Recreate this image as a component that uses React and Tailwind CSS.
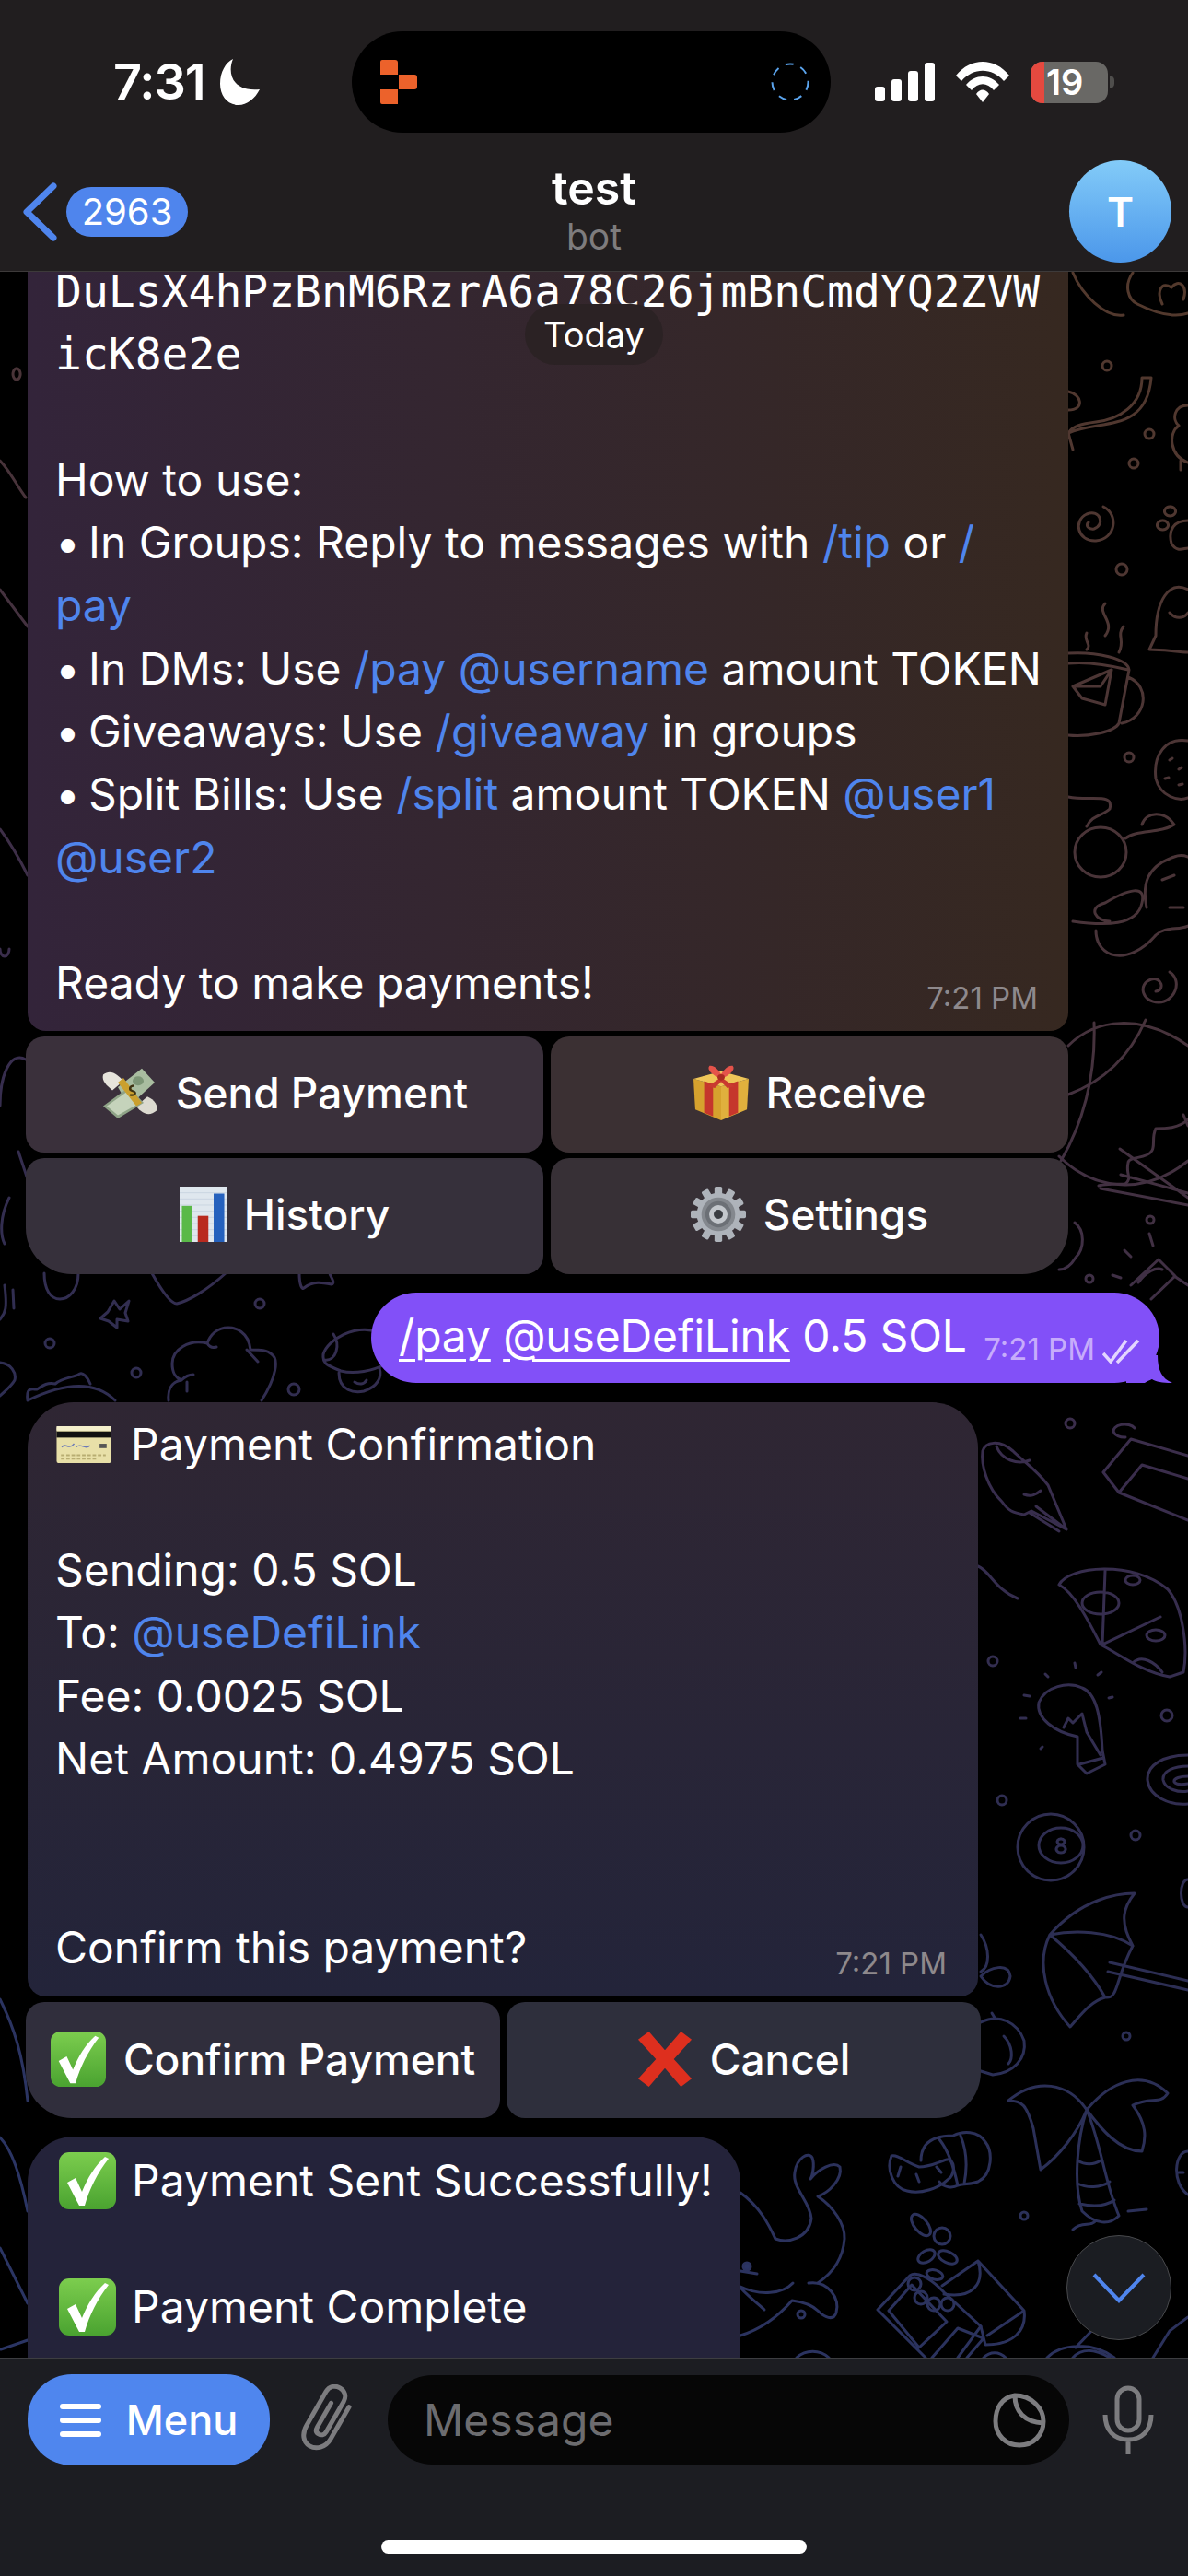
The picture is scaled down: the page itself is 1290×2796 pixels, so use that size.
const Dot = ({ x, y, r = 6 }) => <circle cx={x} cy={y} r={r} />;

// doodle wallpaper, drawn in page coordinates
const Wallpaper = () => (
  <svg className="absolute top-0 left-0" width="1290" height="2796" viewBox="0 0 1290 2796" fill="none" stroke="url(#wp)" strokeWidth="3" strokeLinecap="round" strokeLinejoin="round">
    <defs>
      <linearGradient id="wp" gradientUnits="userSpaceOnUse" x1="1290" y1="300" x2="300" y2="2500">
        <stop offset="0" stopColor="#53392c" />
        <stop offset="0.3" stopColor="#48333a" />
        <stop offset="0.5" stopColor="#3a2d4c" />
        <stop offset="0.72" stopColor="#2b2e54" />
        <stop offset="1" stopColor="#2b3564" />
      </linearGradient>
    </defs>
    {/* top right */}
    <path d="M1165 296C1175 320 1200 345 1220 342M1230 296C1220 310 1225 325 1235 330C1255 340 1275 345 1290 340M1262 330C1255 315 1262 305 1272 312C1280 302 1290 310 1285 325" />
    <Dot x={1202} y={397} r={5} />
    <path d="M1160 470C1195 455 1245 470 1250 410L1240 410C1240 440 1215 455 1190 458C1175 460 1165 462 1160 470L1165 488M1160 425C1175 428 1178 445 1160 445" />
    <Dot x={1248} y={471} r={5} />
    <Dot x={1231} y={503} r={5} />
    <path d="M1290 440C1275 440 1272 455 1280 462C1268 470 1270 495 1290 502M1282 500L1282 510" />
    <path d="M1198 550C1215 558 1212 585 1190 587C1170 588 1165 565 1180 558C1195 552 1200 570 1188 574C1182 575 1178 570 1182 567" />
    <path d="M1290 565C1275 565 1268 575 1272 590C1278 600 1285 595 1290 595M1262 565a6 5 0 1 0 1 0M1270 550a6 5 0 1 0 1 0" />
    <Dot x={1218} y={618} r={6} />
    <path d="M1290 640C1270 630 1255 650 1255 690L1248 705C1265 705 1280 708 1290 708M1270 665C1276 672 1285 672 1290 665" />
    <path d="M1160 709C1190 707 1225 715 1226 727L1215 785C1210 795 1180 800 1160 798M1160 720C1180 718 1205 722 1225 727M1225 735C1250 745 1245 780 1218 785M1165 745L1207 727L1200 765L1175 758ZM1165 745L1195 745L1207 727" />
    <path d="M1200 655C1190 665 1212 675 1200 690M1180 687C1176 695 1186 700 1180 705M1220 680C1212 690 1222 695 1215 708" />
    <Dot x={1226} y={822} r={5} />
    <path d="M1290 804C1265 800 1252 820 1255 845C1260 865 1280 870 1290 866M1270 825l3 -2M1280 835l3 -2M1265 845l4 -1M1280 852l4 -1" />
    <ellipse cx="1195" cy="925" rx="28" ry="27" />
    <path d="M1160 865C1185 870 1210 860 1205 878C1198 885 1185 885 1180 897M1222 910C1235 900 1260 905 1275 895C1265 880 1245 880 1240 895M1165 1000C1200 1005 1235 1005 1240 980C1245 960 1225 965 1200 980C1180 985 1190 1000 1205 1000M1190 1010C1190 1040 1225 1050 1255 1015C1265 1005 1280 1010 1290 1005M1245 985C1240 960 1245 940 1275 930C1280 928 1285 928 1290 930M1262 955L1275 950M1270 985L1285 985" />
    <path d="M1270 1055C1285 1065 1275 1088 1258 1088C1240 1088 1235 1068 1250 1063C1262 1060 1265 1075 1255 1076" />
    {/* globe beside the keyboard rows */}
    <path d="M1160 1135C1190 1105 1240 1100 1290 1135M1188 1110C1190 1170 1175 1220 1152 1260M1244 1107C1225 1150 1195 1175 1160 1188M1150 1255C1185 1290 1240 1300 1290 1260" />
    <path d="M1290 1215C1280 1225 1265 1225 1255 1225C1250 1235 1255 1245 1250 1250C1245 1258 1225 1255 1225 1262C1222 1275 1230 1278 1222 1285C1210 1285 1200 1285 1193 1287M1216 1247L1290 1300M1217 1275L1290 1295M1195 1290L1290 1308M1285 1210L1290 1222" />
    <Dot x={1249} y={1324} r={4} />
    <Dot x={1183} y={1388} r={4} />
    <path d="M1248 1339L1252 1352M1221 1357L1228 1364M1208 1384L1217 1387M1167 1327C1178 1335 1178 1355 1168 1365C1162 1375 1155 1378 1150 1378" />
    <path d="M1228 1395L1258 1367L1276 1385L1250 1410M1236 1392C1245 1380 1255 1375 1262 1378M1275 1385L1290 1395" />
    <path d="M48 1382C48 1400 55 1410 65 1410C75 1410 85 1400 85 1382M5 1395C8 1420 6 1425 0 1432M14 1400L15 1420" />
    <path d="M165 1382C175 1400 185 1415 192 1415C205 1412 225 1400 245 1382" />
    <path d="M325 1382C325 1395 328 1400 330 1398C340 1390 350 1392 360 1394C365 1392 358 1385 358 1382" />
    <path d="M124 1412L130 1421L140 1412L136 1425L139 1434L127 1432L127 1441L118 1434L109 1431L117 1424Z" />
    <Dot x={54} y={1458} r={5} />
    <Dot x={282} y={1415} r={5} />
    <Dot x={148} y={1490} r={5} />
    <Dot x={319} y={1508} r={6} />
    <path d="M0 1479C12 1480 18 1490 16 1498C12 1505 5 1510 0 1515" />
    <path d="M125 1520C105 1500 75 1498 30 1520M30 1520C28 1505 35 1508 40 1508C45 1505 50 1500 60 1502C68 1495 80 1495 85 1492C90 1488 95 1495 98 1502" />
    <path d="M284 1520C300 1495 303 1475 295 1470C290 1465 283 1465 272 1465C270 1445 255 1441 248 1441C235 1441 228 1450 225 1458C205 1453 187 1465 187 1480C187 1490 190 1495 197 1498C185 1500 182 1510 183 1520M225 1458C228 1463 232 1463 235 1462M268 1465L280 1478M197 1498C200 1495 205 1492 210 1492M203 1500L203 1510" />
    <path d="M415 1447C385 1435 355 1455 351 1470C350 1480 355 1482 370 1488C385 1492 405 1488 420 1480M368 1490C368 1510 385 1512 395 1510C410 1505 415 1495 412 1485M362 1448C370 1460 365 1478 352 1476M385 1500C390 1503 395 1503 398 1498" />
    {/* right column */}
    <path d="M1067 1575C1070 1565 1085 1562 1100 1575C1110 1585 1125 1595 1138 1612L1158 1660L1120 1640L1112 1644C1100 1642 1095 1640 1088 1630C1072 1615 1065 1590 1067 1575ZM1082 1570C1088 1585 1105 1590 1118 1585M1158 1660L1125 1635M1150 1662L1118 1642M1112 1622C1120 1625 1125 1622 1130 1618" />
    <Dot x={1162} y={1545} r={5} />
    <path d="M1198 1598L1228 1562L1290 1580M1198 1598L1215 1620L1290 1650M1215 1620L1240 1590L1290 1605M1222 1560a12 7 0 1 1 10 -10" />
    <path d="M1062 1700C1075 1705 1080 1725 1105 1735" />
    <path d="M1150 1720C1160 1700 1230 1693 1268 1725C1285 1745 1290 1790 1285 1815L1270 1820C1240 1815 1215 1795 1195 1785C1180 1755 1165 1728 1150 1720ZM1200 1705L1197 1785M1197 1785L1260 1755M1175 1740a20 12 0 1 0 40 0a20 12 0 1 0 -40 0M1222 1715a8 5 0 1 0 16 0a8 5 0 1 0 -16 0M1245 1775a10 6 0 1 0 20 0a10 6 0 1 0 -20 0M1230 1805C1240 1795 1255 1805 1262 1815" />
    <path d="M1170 1885C1145 1880 1125 1865 1128 1848C1135 1830 1160 1825 1175 1832C1190 1838 1195 1860 1197 1900L1200 1915L1180 1925L1170 1915ZM1155 1875L1160 1865L1165 1870L1175 1860L1180 1880L1195 1905M1172 1915L1198 1908" />
    <path d="M1112 1840L1118 1841M1108 1865L1114 1865M1135 1817L1138 1820M1167 1805L1168 1810M1192 1818L1196 1815M1204 1843L1208 1842M1130 1898L1132 1896" />
    <Dot x={1078} y={1803} r={5} />
    <Dot x={1267} y={1862} r={6} />
    <Dot x={1088} y={1954} r={5} />
    <Dot x={1233} y={1992} r={5} />
    <path d="M1290 1905C1265 1905 1245 1915 1246 1932C1248 1950 1270 1960 1290 1958M1290 1917C1275 1917 1262 1922 1263 1932C1265 1942 1280 1946 1290 1944M1290 1928C1282 1928 1274 1930 1275 1934C1278 1938 1285 1937 1290 1936" />
    <circle cx="1141" cy="2005" r="36" />
    <ellipse cx="1152" cy="2003" rx="24" ry="19" />
    <path d="M1152 1996a4 3 0 1 0 .1 0M1152 2003a5 4 0 1 0 .1 0" />
    <path d="M1290 2040C1280 2040 1280 2070 1290 2070" />
    <path d="M1140 2100C1175 2060 1215 2055 1232 2055C1220 2070 1215 2085 1230 2112M1140 2100C1165 2095 1205 2095 1230 2112M1140 2100C1125 2130 1135 2170 1162 2200C1175 2185 1185 2172 1200 2168C1215 2170 1210 2150 1230 2112M1140 2100C1170 2125 1190 2150 1200 2168M1205 2130L1290 2150M1203 2140L1290 2160" />
    <path d="M1065 2100C1075 2115 1075 2135 1065 2140M1065 2145C1075 2160 1095 2160 1097 2145C1095 2130 1075 2135 1065 2145" />
    <Dot x={1223} y={2210} r={4} />
    <path d="M1065 2195C1085 2185 1105 2195 1112 2215C1115 2235 1100 2250 1078 2252L1065 2248M1080 2190L1077 2185M1090 2210C1100 2220 1100 2235 1095 2240" />
    <path d="M1180 2290C1160 2260 1125 2255 1095 2280C1110 2280 1115 2285 1122 2310L1130 2355C1150 2340 1170 2315 1180 2290ZM1180 2290C1205 2260 1240 2245 1268 2272C1260 2285 1250 2275 1230 2285C1245 2305 1245 2320 1240 2335C1215 2335 1195 2310 1180 2290ZM1180 2290C1170 2320 1165 2370 1175 2400C1190 2415 1205 2415 1215 2405C1200 2370 1195 2325 1180 2290ZM1170 2345C1178 2350 1188 2350 1195 2345M1170 2370C1180 2375 1195 2375 1205 2368M1172 2392C1185 2395 1200 2395 1210 2388M1165 2420C1175 2410 1185 2418 1190 2410M1225 2400L1245 2398" />
    <Dot x={1112} y={2405} r={4} />
    <path d="M1290 2335C1275 2335 1272 2370 1290 2382M1280 2358L1285 2358" />
    {/* mandarin */}
    <path d="M968 2340C975 2338 985 2348 998 2352C1015 2352 1030 2340 1032 2345C1038 2350 1035 2362 1030 2365C1020 2375 1000 2382 985 2378C970 2375 962 2355 968 2340Z" />
    <path d="M1000 2345C1000 2325 1015 2318 1035 2318C1045 2313 1062 2312 1070 2325C1078 2335 1078 2360 1062 2368C1050 2372 1045 2370 1040 2372C1035 2375 1025 2375 1020 2368M1020 2322C1030 2335 1035 2350 1040 2372M1043 2318C1050 2335 1050 2355 1047 2370M978 2352L975 2362M995 2360L998 2368M1017 2352L1022 2358" />
    {/* coins and box */}
    <ellipse cx="1000" cy="2415" rx="14" ry="7" transform="rotate(50 1000 2415)" />
    <Dot x={1023} y={2427} r={9} />
    <ellipse cx="1006" cy="2449" rx="10" ry="6" transform="rotate(-30 1006 2449)" />
    <ellipse cx="1029" cy="2450" rx="11" ry="6" transform="rotate(25 1029 2450)" />
    <ellipse cx="1015" cy="2469" rx="9" ry="5" transform="rotate(15 1015 2469)" />
    <path d="M953 2507L988 2470C995 2465 1010 2472 1025 2488L1065 2525L1040 2559M1005 2559L953 2507M965 2508L990 2480L1028 2520L998 2548Z" />
    <Dot x={993} y={2479} r={7} />
    <Dot x={1000} y={2494} r={7} />
    <Dot x={1014} y={2501} r={7} />
    <Dot x={1029} y={2501} r={7} />
    <path d="M1023 2481L1062 2454L1112 2508C1115 2530 1100 2545 1070 2545L1065 2525M1062 2454C1070 2480 1055 2495 1025 2490M1112 2508L1072 2535M1012 2559L1040 2527L1068 2538L1050 2559" />
    {/* dolphin */}
    <path d="M804 2380C825 2395 835 2415 842 2430C855 2435 878 2430 881 2408C880 2390 860 2375 863 2358C865 2342 878 2335 882 2342C885 2350 882 2362 880 2365C888 2355 905 2345 912 2352C915 2365 900 2380 888 2384C905 2395 918 2415 917 2430C915 2455 900 2470 888 2478" />
    <path d="M804 2482C825 2492 850 2490 861 2478M878 2478C900 2475 912 2495 908 2510C905 2520 895 2515 888 2508C880 2500 868 2498 860 2497C840 2520 820 2530 804 2535M804 2483C815 2495 825 2502 830 2507M804 2465L822 2468" />
    <Dot x={870} y={2512} r={4} />
    <circle cx="811" cy="2460" r="4" fill="#2b3564" />
    <path d="M865 2559C875 2550 890 2550 900 2559M1068 2559C1075 2552 1085 2552 1092 2559M1137 2559C1150 2545 1185 2540 1210 2559M1165 2559C1175 2548 1190 2550 1205 2559M1190 2525L1168 2548M1252 2559L1270 2530L1290 2515" />
    {/* left strip */}
    <path d="M0 2170C15 2200 25 2230 30 2280M0 2320C10 2330 20 2350 30 2400M0 2440L30 2500M10 1300C0 1320 0 1340 5 1350M28 1150C10 1140 0 1170 0 1200M18 400a4 6 0 1 0 .1 0M0 500C10 510 20 530 28 540M0 640L30 680M0 900C15 920 25 940 30 950M0 1030a5 8 0 1 0 10 0M20 1250L30 1280" />
    <path d="M1 2550L30 2540" />
  </svg>
);

const Check = ({ size = 62 }) => (
  <svg width={size} height={size} viewBox="0 0 62 62" className="shrink-0">
    <defs>
      <linearGradient id="chk" x1="0" y1="0" x2="0" y2="1">
        <stop offset="0" stopColor="#7ccd4e" />
        <stop offset="1" stopColor="#4aa330" />
      </linearGradient>
    </defs>
    <rect x="0" y="0" width="62" height="62" rx="11" fill="url(#chk)" />
    <path d="M9 33L18 28L25 43C31 28 39 15 50 5L54 7C42 22 33 40 28 58L22 58Z" fill="#fff" />
  </svg>
);

const Cross = () => (
  <svg width="60" height="60" viewBox="0 0 62 62" className="shrink-0">
    <path d="M1 9L13 0L31 21L49 0L61 9L41 31L61 53L49 62L31 41L13 62L1 53L21 31Z" fill="#de2f1e" />
  </svg>
);

const Card = () => (
  <svg width="62" height="40" viewBox="0 0 62 42" className="shrink-0">
    <rect width="62" height="42" rx="2" fill="#e8e0a8" />
    <rect y="0" width="62" height="5" fill="#f5f1cc" />
    <rect y="6" width="62" height="7" fill="#111" />
    <path d="M6 24C10 18 14 28 20 20M22 24C28 18 32 28 38 22" stroke="#6b79b8" strokeWidth="1.5" fill="none" />
    <rect x="49" y="20" width="8" height="5" fill="#555" />
    <path d="M5 33H56M5 37H45" stroke="#b8ad72" strokeWidth="2" strokeDasharray="4 2" />
  </svg>
);

const MoneyWings = () => (
  <svg width="62" height="56" viewBox="0 0 62 66" preserveAspectRatio="none" className="shrink-0">
    <path d="M2 10C10 2 18 10 24 18L12 30C6 24 0 18 2 10Z" fill="#e6e4dc" />
    <path d="M60 56C52 64 44 60 38 50L50 38C58 42 62 50 60 56Z" fill="#dcdad0" />
    <path d="M18 26L44 2L58 20L30 50Z" fill="#a9bda0" />
    <path d="M2 50L30 26L46 46L18 66Z" fill="#8fa488" />
    <path d="M6 50L30 30L42 46L18 62Z" fill="#c5d3bb" />
    <circle cx="40" cy="18" r="6" fill="#7d9676" />
    <path d="M24 14L44 46L38 50L18 20Z" fill="#caa02f" />
    <path d="M36 24C30 24 30 30 34 31C38 32 38 37 31 36" stroke="#3d3212" strokeWidth="2.5" fill="none" />
  </svg>
);

const Gift = () => (
  <svg width="60" height="60" viewBox="0 0 62 72" preserveAspectRatio="none" className="shrink-0">
    <path d="M0 18L31 28V72L2 58Z" fill="#d6a22e" />
    <path d="M62 18L31 28V72L60 58Z" fill="#e0b03d" />
    <path d="M0 18L31 8L62 18L31 28Z" fill="#efc658" />
    <path d="M12 21L22 25V67L12 62ZM40 25L50 21V62L40 67Z" fill="#c5362c" />
    <path d="M31 18C22 14 14 6 18 1C24 0 29 8 31 12C33 8 38 0 44 1C48 6 40 14 31 18Z" fill="#e4534a" />
    <path d="M31 16L16 28L24 30L31 22L38 30L46 28Z" fill="#c93a30" />
    <circle cx="31" cy="16" r="4" fill="#a92a22" />
  </svg>
);

const Chart = () => (
  <svg width="51" height="60" viewBox="0 0 62 72" preserveAspectRatio="none" className="shrink-0">
    <rect width="62" height="72" fill="#dfe7ee" />
    <path d="M0 8H62M0 16H62M0 24H62M0 32H62M0 40H62M0 48H62M0 56H62M0 64H62" stroke="#c6d2de" strokeWidth="1" />
    <rect x="3" y="25" width="14" height="47" fill="#5ab948" />
    <rect x="24" y="38" width="14" height="34" fill="#b92a1f" />
    <rect x="45" y="9" width="14" height="63" fill="#2561bd" />
  </svg>
);

const Gear = () => (
  <svg width="60" height="60" viewBox="0 0 72 72" className="shrink-0">
    <g fill="#aeb3ba">
      <circle cx="36" cy="36" r="28" />
      {[0, 30, 60, 90, 120, 150, 180, 210, 240, 270, 300, 330].map((a) => (
        <rect key={a} x="31" y="0" width="10" height="14" rx="2" transform={`rotate(${a} 36 36)`} />
      ))}
    </g>
    <circle cx="36" cy="36" r="22" fill="#84888e" />
    <circle cx="36" cy="36" r="17" fill="#6c7076" />
    <circle cx="36" cy="36" r="12" fill="#c3c7cc" />
    <circle cx="36" cy="36" r="6" fill="#3a3d42" />
  </svg>
);

const Link = ({ children }) => <span className="text-[#4f85ed]">{children}</span>;

const Bullet = () => <span className="inline-block w-[36px]">•</span>;

const Time = ({ className }) => (
  <span className={`absolute text-[33px] leading-none text-[#8e898c] ${className}`}>7:21 PM</span>
);

const KeyButton = ({ className, icon, label }) => (
  <button className={`flex h-[126px] items-center justify-center gap-[19px] pb-[3px] text-[46px] font-medium text-white ${className}`}>
    {icon}
    <span>{label}</span>
  </button>
);

export default function App() {
  return (
    <div className="relative flex h-[2796px] w-[1290px] flex-col overflow-hidden bg-black text-white [font-family:Inter,sans-serif]">
      <Wallpaper />

      <header className="relative z-10 h-[295px] shrink-0 border-b border-[#3d3a3a] bg-[#211e1f]">
        <div className="flex items-center pt-[34px] pl-[123px]">
          <div className="flex w-[259px] items-center gap-[16px]">
            <span className="text-[54px] leading-none font-semibold tracking-[-1px]">7:31</span>
            <svg width="44" height="50" viewBox="0 0 44 50" fill="#fff">
              <path d="M14 0C8 14 12 36 43 33C38 43 29 50 20 50C8 50 0 40 0 27C0 14 6 4 14 0Z" />
            </svg>
          </div>
          <div className="flex h-[110px] w-[520px] items-center justify-between rounded-full bg-black pr-[23px] pl-[31px]">
            <svg width="40" height="48" viewBox="0 0 40 48" fill="#ec622b">
              <path d="M0 2a2 2 0 0 1 2-2H16a3 3 0 0 1 3 3V16H0ZM20 16H37a3 3 0 0 1 3 3V29a3 3 0 0 1-3 3H20ZM0 32H19V48H2a2 2 0 0 1-2-2Z" />
            </svg>
            <svg width="42" height="42" viewBox="0 0 42 42" fill="none" stroke="#5aa3ec" strokeWidth="2">
              <circle cx="21" cy="21" r="19.5" strokeDasharray="9 8.2" />
            </svg>
          </div>
          <div className="ml-[48px] flex items-center">
            <svg width="66" height="42" viewBox="0 0 66 42" fill="#fff">
              <rect x="0" y="26" width="11" height="16" rx="3" />
              <rect x="18" y="18" width="11" height="24" rx="3" />
              <rect x="36" y="9" width="11" height="33" rx="3" />
              <rect x="54" y="0" width="11" height="42" rx="3" />
            </svg>
            <svg className="ml-[22px]" width="58" height="44" viewBox="0 0 58 44" fill="#fff">
              <path d="M0 15C16 -5 42 -5 58 15L52 21C39 6 19 6 6 21Z" />
              <path d="M11 25C21 13 37 13 47 25L41 31C34 22 24 22 17 31Z" />
              <path d="M22 35C26 29 32 29 36 35L29 44Z" />
            </svg>
            <div className="ml-[23px] flex h-[45px] w-[84px] items-center overflow-hidden rounded-[13px] bg-[#696865]">
              <div className="h-full w-[15px] bg-[#e5493f]" />
              <span className="ml-[2px] text-[38px] leading-[40px] font-semibold">19</span>
            </div>
            <div className="ml-[2px] h-[14px] w-[5px] rounded-r-full bg-[#4f4e4c]" />
          </div>
        </div>

        <div className="mt-[30px] flex h-[111px] items-center pr-[18px] pl-[25px]">
          <div className="flex w-[300px] items-center gap-[10px]">
            <svg width="37" height="64" viewBox="0 0 37 64" fill="none" stroke="#4f85ed" strokeWidth="7" strokeLinecap="round" strokeLinejoin="round">
              <path d="M33 4L4 32L33 60" />
            </svg>
            <span className="flex h-[54px] w-[132px] items-center justify-center rounded-full bg-[#4f85ed] text-[40px]">2963</span>
          </div>
          <div className="-mt-[5px] flex w-[640px] flex-col items-center">
            <span className="text-[50px] leading-[60px] font-semibold">test</span>
            <span className="text-[39px] leading-[46px] text-[#7e7c7d]">bot</span>
          </div>
          <div className="flex flex-1 justify-end">
            <div className="flex h-[111px] w-[111px] items-center justify-center rounded-full bg-linear-to-b from-[#83cbf8] to-[#4b97ea] text-[44px] font-semibold">T</div>
          </div>
        </div>
      </header>

      <main className="relative z-0 min-h-0 flex-1 overflow-hidden">
        <div className="-mt-[25px] flex flex-col pl-[30px] text-[48px] leading-[68.3px]">
          <div className="relative w-[1130px] rounded-b-[20px] bg-linear-to-r from-[#33243a] to-[#362820] pt-[12px] pr-[30px] pb-[17px] pl-[30px] whitespace-nowrap">
            <div className="[font-family:'DejaVu_Sans_Mono',monospace]">DuLsX4hPzBnM6RzrA6a78C26jmBnCmdYQ2ZVW</div>
            <div className="[font-family:'DejaVu_Sans_Mono',monospace]">icK8e2e</div>
            <div>&nbsp;</div>
            <div>How to use:</div>
            <div><Bullet />In Groups: Reply to messages with <Link>/tip</Link> or <Link>/</Link></div>
            <div><Link>pay</Link></div>
            <div><Bullet />In DMs: Use <Link>/pay</Link> <Link>@username</Link> amount TOKEN</div>
            <div><Bullet />Giveaways: Use <Link>/giveaway</Link> in groups</div>
            <div><Bullet />Split Bills: Use <Link>/split</Link> amount TOKEN <Link>@user1</Link></div>
            <div><Link>@user2</Link></div>
            <div>&nbsp;</div>
            <div>Ready to make payments!</div>
            <Time className="right-[33px] bottom-[19px]" />
          </div>

          <div className="-ml-[2px] mt-[6px] grid w-[1132px] grid-cols-2 gap-x-[8px] gap-y-[6px]">
            <KeyButton className="rounded-[20px] bg-[#3a303b]" icon={<MoneyWings />} label="Send Payment" />
            <KeyButton className="rounded-[20px] bg-[#3b3033]" icon={<Gift />} label="Receive" />
            <KeyButton className="rounded-[20px] rounded-bl-[50px] bg-[#36303b]" icon={<Chart />} label="History" />
            <KeyButton className="rounded-[20px] rounded-br-[50px] bg-[#373036]" icon={<Gear />} label="Settings" />
          </div>

          <div className="relative mt-[20px] ml-[373px] flex h-[98px] w-[856px] items-center rounded-[49px] bg-[#8250f8] pb-[2px] pl-[30px] whitespace-nowrap">
            <span className="tracking-[-0.15px]"><span className="underline decoration-[3px] underline-offset-[8px]">/pay</span> <span className="underline decoration-[3px] underline-offset-[8px]">@useDefiLink</span> 0.5 SOL</span>
            <span className="absolute right-[70px] bottom-[20px] text-[33px] leading-none text-[#c7acfb]">7:21 PM</span>
            <svg className="absolute right-[20px] bottom-[20px]" width="42" height="28" viewBox="0 0 42 28" fill="none" stroke="#e3d6fe" strokeWidth="3.5">
              <path d="M1 16L9 25L26 2M16 26L39 2" />
            </svg>
            <svg className="absolute -right-[14px] bottom-0" width="50" height="30" viewBox="0 0 50 30" fill="#8250f8">
              <path d="M0 30H20C23 28 28 26 28 26C32 29 40 30 50 30C40 26 34 18 34 0H0Z" />
            </svg>
          </div>

          <div className="relative mt-[21px] w-[1032px] rounded-t-[50px] rounded-b-[20px] bg-linear-to-b from-[#2f2633] to-[#23243a] pt-[12px] pb-[19px] pl-[30px]">
            <div className="flex items-center gap-[20px]"><Card />Payment Confirmation</div>
            <div>&nbsp;</div>
            <div>Sending: 0.5 SOL</div>
            <div>To: <Link>@useDefiLink</Link></div>
            <div>Fee: 0.0025 SOL</div>
            <div>Net Amount: 0.4975 SOL</div>
            <div>&nbsp;</div>
            <div>&nbsp;</div>
            <div>Confirm this payment?</div>
            <Time className="right-[34px] bottom-[19px]" />
          </div>

          <div className="-ml-[2px] mt-[6px] grid w-[1037px] grid-cols-2 gap-x-[7px]">
            <KeyButton className="rounded-[20px] rounded-bl-[50px] bg-[#302e3c]" icon={<Check size={60} />} label="Confirm Payment" />
            <KeyButton className="rounded-[20px] rounded-br-[50px] bg-[#2e2f3c]" icon={<Cross />} label="Cancel" />
          </div>

          <div className="mt-[20px] w-[774px] rounded-t-[50px] bg-[#24233a] pt-[14px] pb-[60px] pl-[34px]">
            <div className="flex items-center gap-[17px]"><Check />Payment Sent Successfully!</div>
            <div>&nbsp;</div>
            <div className="flex items-center gap-[17px]"><Check />Payment Complete</div>
          </div>
        </div>

        <button className="absolute right-[18px] bottom-[19px] flex h-[114px] w-[114px] items-center justify-center rounded-full border border-[#47484b] bg-[#1b1d22]">
          <svg width="58" height="34" viewBox="0 0 58 34" fill="none" stroke="#4f85ed" strokeWidth="4">
            <path d="M2 3L29 31L56 3" />
          </svg>
        </button>
      </main>

      <footer className="relative z-10 h-[237px] shrink-0 border-t border-[#3d3e41] bg-[#1c1d22]">
        <div className="flex items-center pt-[17px] pl-[30px]">
          <button className="flex h-[99px] w-[263px] items-center justify-center gap-[26px] rounded-[48px] bg-[#4f86ee] text-[45px] font-medium">
            <svg width="46" height="36" viewBox="0 0 46 36" fill="#fff">
              <rect width="45" height="6" y="0" rx="3" />
              <rect width="45" height="6" y="15" rx="3" />
              <rect width="45" height="6" y="30" rx="3" />
            </svg>
            Menu
          </button>
          <svg className="ml-[30px] shrink-0" width="70" height="78" viewBox="0 0 70 78" fill="none" stroke="#7c7c7f" strokeWidth="5" strokeLinecap="round">
            <g transform="rotate(30 35 39)">
              <path d="M46 16V56C46 67 38 74 30 74C22 74 16 67 16 56V14C16 7 21 3 27 3C33 3 38 7 38 14V52C38 56 35 58 32 58C29 58 27 56 27 52V22" />
            </g>
          </svg>
          <div className="ml-[28px] flex h-[97px] w-[740px] items-center justify-between rounded-full bg-[#060606] pr-[25px] pl-[39px] text-[48px] text-[#6c6c6f]">
            <span>Message</span>
            <svg width="58" height="60" viewBox="0 0 58 60" fill="none" stroke="#7c7c7f" strokeWidth="5">
              <path d="M24 3C10 5 3 17 3 31C3 46 14 57 29 57C44 57 55 46 55 31C55 17 42 3 24 3ZM24 3C24 20 34 32 55 33" />
            </svg>
          </div>
          <svg className="ml-[36px]" width="56" height="76" viewBox="0 0 56 76" fill="none" stroke="#7c7c7f" strokeWidth="5">
            <rect x="16" y="3" width="24" height="46" rx="12" />
            <path d="M3 32C3 49 13 59 28 59C43 59 53 49 53 32M28 59V75" />
          </svg>
        </div>
        <div className="mx-auto mt-[81px] h-[15px] w-[462px] rounded-full bg-white" />
      </footer>

      <div className="absolute top-[330px] left-[570px] z-0 flex h-[66px] w-[150px] items-center justify-center rounded-full bg-[#2b2224] text-[38px]">Today</div>
    </div>
  );
}
